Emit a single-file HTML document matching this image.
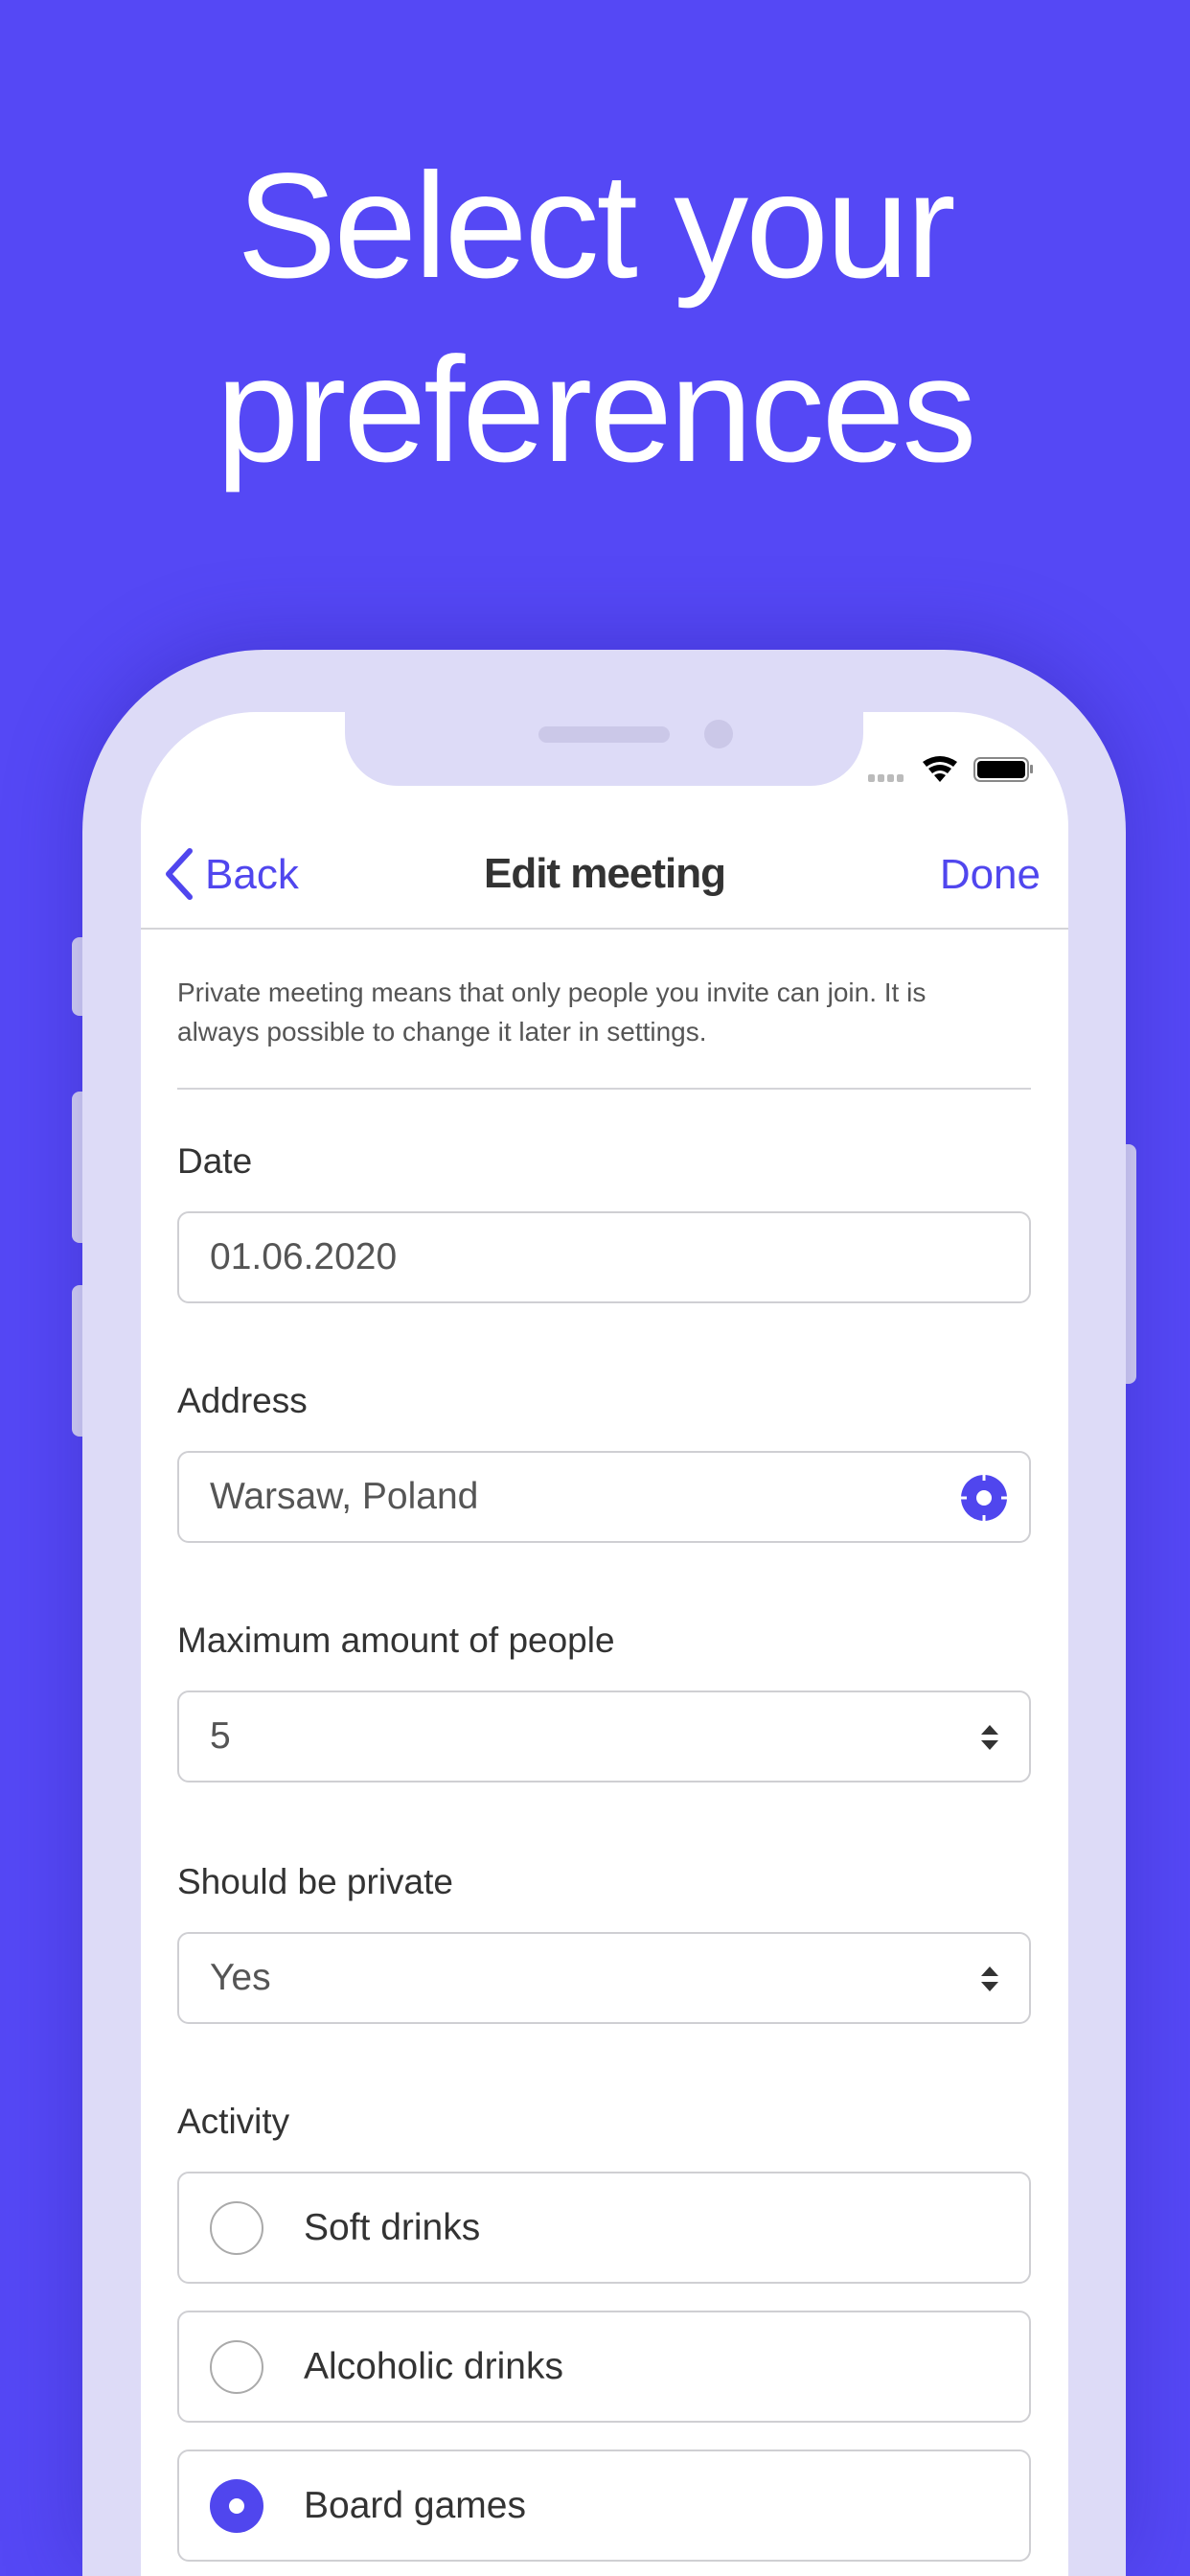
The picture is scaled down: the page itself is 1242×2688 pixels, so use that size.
<!DOCTYPE html>
<html style="width:1242px;height:2688px;overflow:hidden"><head><meta charset="utf-8"><style>
*{margin:0;padding:0;box-sizing:border-box}
body{width:1242px;height:2688px;overflow:hidden;background:#5548f5;font-family:"Liberation Sans",sans-serif;position:relative}
#w{position:relative;width:1242px;height:2688px;overflow:hidden}
.a{position:absolute}
.t{position:absolute;left:0;width:1242px;text-align:center;color:#fff;font-size:156px;letter-spacing:-3px;line-height:1}
.lbl{position:absolute;left:185px;font-size:37px;color:#333}
.inp{position:absolute;left:185px;width:891px;height:96px;border:2px solid #cfcfd3;border-radius:12px;background:#fff}
.val{position:absolute;left:32px;top:0;line-height:92px;font-size:39px;color:#555}
.rad{position:absolute;left:185px;width:891px;height:117px;border:2px solid #cfcfd3;border-radius:12px}
.rc{position:absolute;left:32px;top:29px;width:56px;height:56px;border-radius:50%;border:2px solid #aaa}
.rt{position:absolute;left:130px;top:0;line-height:113px;font-size:39px;color:#333}
</style></head><body><div id="w">
<div class="t" style="top:158px">Select your</div>
<div class="t" style="top:350px">preferences</div>

<div class="a" style="left:75px;top:978px;width:20px;height:82px;background:#dddbf7;border-radius:8px"></div>
<div class="a" style="left:75px;top:1139px;width:20px;height:158px;background:#dddbf7;border-radius:8px"></div>
<div class="a" style="left:75px;top:1341px;width:20px;height:158px;background:#dddbf7;border-radius:8px"></div>
<div class="a" style="left:1166px;top:1194px;width:20px;height:250px;background:#dddbf7;border-radius:8px"></div>
<div class="a" style="left:86px;top:678px;width:1089px;height:2010px;background:#dddbf7;border-radius:190px 190px 0 0;box-shadow:0 -10px 80px rgba(40,30,160,.35)"></div>
<div class="a" style="left:147px;top:743px;width:968px;height:1945px;background:#fff;border-radius:120px 120px 0 0"></div>
<div class="a" style="left:360px;top:730px;width:541px;height:90px;background:#dddbf7;border-radius:0 0 55px 55px"></div>
<div class="a" style="left:562px;top:758px;width:137px;height:17px;background:#cbc8e8;border-radius:9px"></div>
<div class="a" style="left:735px;top:751px;width:30px;height:30px;background:#cbc8e8;border-radius:50%"></div>

<svg class="a" style="left:900px;top:785px" width="185" height="40" viewBox="0 0 185 40">
<g fill="#bbb"><rect x="6" y="23" width="7" height="8" rx="2"/><rect x="16" y="23" width="7" height="8" rx="2"/><rect x="26" y="23" width="7" height="8" rx="2"/><rect x="36" y="23" width="7" height="8" rx="2"/></g>
<path d="M63 10 Q81 -2 99 10 L95 15 Q81 5 67 15Z M69 17 Q81 9 93 17 L89 22 Q81 16 73 22Z M75 24 Q81 20 87 24 L81 31Z" fill="#000"/>
<rect x="117" y="6" width="56" height="24" rx="6" fill="none" stroke="#888" stroke-width="2"/>
<rect x="120" y="9" width="50" height="18" rx="4" fill="#000"/>
<rect x="175" y="13" width="3" height="9" rx="1" fill="#888"/>
</svg>

<svg class="a" style="left:168px;top:884px" width="36" height="56" viewBox="0 0 36 56"><path d="M30 4 L8 28 L30 52" fill="none" stroke="#5046ee" stroke-width="6" stroke-linecap="round" stroke-linejoin="round"/></svg>
<div class="a" style="left:214px;top:888px;font-size:44px;color:#5046ee">Back</div>
<div class="a" style="left:0;width:1262px;text-align:center;top:887px;font-size:44px;font-weight:bold;color:#333;letter-spacing:-1px">Edit meeting</div>
<div class="a" style="right:156px;top:888px;font-size:44px;color:#5046ee">Done</div>
<div class="a" style="left:147px;top:968px;width:968px;height:2px;background:#d4d4d8"></div>

<div class="a" style="left:185px;top:1015px;width:850px;font-size:28px;line-height:41px;color:#555">Private meeting means that only people you invite can join. It is always possible to change it later in settings.</div>
<div class="a" style="left:185px;top:1135px;width:891px;height:2px;background:#d4d4d8"></div>

<div class="lbl" style="top:1191px">Date</div>
<div class="inp" style="top:1264px"><div class="val">01.06.2020</div></div>
<div class="lbl" style="top:1441px">Address</div>
<div class="inp" style="top:1514px"><div class="val">Warsaw, Poland</div>
<svg class="a" style="left:815px;top:22px" width="50" height="50" viewBox="0 0 50 50"><circle cx="25" cy="25" r="24" fill="#5046ee"/><circle cx="25" cy="25" r="8" fill="#fff"/><g stroke="#fff" stroke-width="3"><line x1="25" y1="0" x2="25" y2="7"/><line x1="25" y1="43" x2="25" y2="50"/><line x1="0" y1="25" x2="7" y2="25"/><line x1="43" y1="25" x2="50" y2="25"/></g></svg></div>
<div class="lbl" style="top:1691px">Maximum amount of people</div>
<div class="inp" style="top:1764px"><div class="val">5</div>
<svg class="a" style="left:835px;top:32px" width="22" height="30" viewBox="0 0 22 30"><path d="M11 2 L20 12 H2Z M11 28 L20 18 H2Z" fill="#333"/></svg></div>
<div class="lbl" style="top:1943px">Should be private</div>
<div class="inp" style="top:2016px"><div class="val">Yes</div>
<svg class="a" style="left:835px;top:32px" width="22" height="30" viewBox="0 0 22 30"><path d="M11 2 L20 12 H2Z M11 28 L20 18 H2Z" fill="#333"/></svg></div>
<div class="lbl" style="top:2193px">Activity</div>
<div class="rad" style="top:2266px"><div class="rc"></div><div class="rt">Soft drinks</div></div>
<div class="rad" style="top:2411px"><div class="rc"></div><div class="rt">Alcoholic drinks</div></div>
<div class="rad" style="top:2556px"><div class="rc" style="border:none;background:#5046ee"><div class="a" style="left:20px;top:20px;width:16px;height:16px;border-radius:50%;background:#fff"></div></div><div class="rt">Board games</div></div>
</div></body></html>
